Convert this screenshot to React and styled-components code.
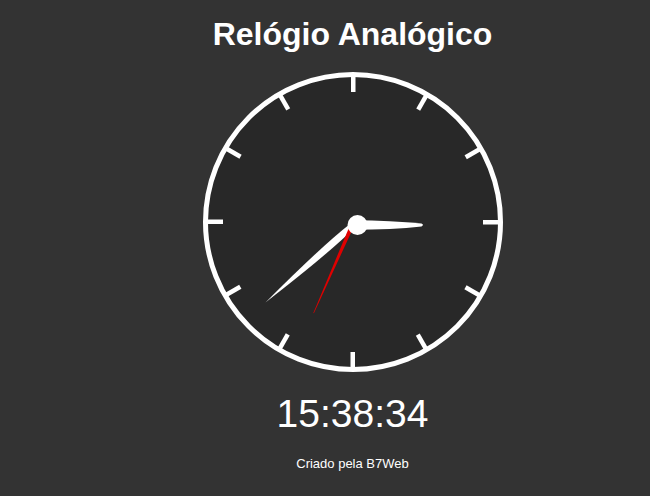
import styled, { createGlobalStyle } from "styled-components";

const GlobalStyle = createGlobalStyle`
  html, body {
    margin: 0;
    padding: 0;
    background-color: #333333;
    overflow: hidden;
  }
`;

const Page = styled.div`
  width: 650px;
  height: 496px;
  box-sizing: border-box;
  padding-left: 55px;
  display: flex;
  flex-direction: column;
  align-items: center;
  font-family: "Liberation Sans", Arial, sans-serif;
  color: #ffffff;
`;

const Title = styled.h1`
  margin: 16px 0 18px 0;
  font-size: 32px;
  font-weight: bold;
  line-height: normal;
`;

const Face = styled.svg`
  display: block;
  width: 300px;
  height: 302px;
`;

const Digital = styled.div`
  margin-top: 19px;
  font-size: 39px;
  line-height: normal;
`;

const Footer = styled.div`
  margin-top: 20px;
  font-size: 13px;
  line-height: normal;
`;

function Clock({ h, m, s }) {
  const ticks = [];
  for (let i = 0; i < 12; i++) {
    ticks.push(
      <rect
        key={i}
        x="148"
        y="5"
        width="4.5"
        height="16"
        fill="#fff"
        transform={`rotate(${i * 30} 150 151)`}
      />
    );
  }
  // hands drawn from a pivot a little off the face centre, like the original
  const hourDeg = (h % 12) * 30 - 90;
  const minDeg = m * 6 - 90;
  const secDeg = s * 6 - 90;

  return (
    <Face viewBox="0 0 300 302">
      <circle cx="150" cy="151" r="147.5" fill="#282828" stroke="#fff" strokeWidth="5" />
      {ticks}
      <g transform={`translate(148 156) rotate(${minDeg + 0.6})`}>
        <path d="M0,-3 Q35,-5 114,0 Q35,5 0,3 Z" fill="#fff" />
      </g>
      <g transform={`translate(149.5 154) rotate(${hourDeg})`}>
        <path d="M0,-4.8 Q40,-4.6 69,-1.4 Q72,0 69,1.4 Q40,4.6 0,4.8 Z" fill="#fff" />
      </g>
      <g transform={`translate(148 157) rotate(${secDeg - 0.3})`}>
        <path d="M0,-2 L93,-0.3 L93,0.3 L0,2 Z" fill="#e00000" />
      </g>
      <circle cx="154.5" cy="154" r="10" fill="#fff" />
    </Face>
  );
}

export default function App() {
  return (
    <Page>
      <GlobalStyle />
      <Title>Relógio Analógico</Title>
      <Clock h={15} m={38} s={34} />
      <Digital>15:38:34</Digital>
      <Footer>Criado pela B7Web</Footer>
    </Page>
  );
}
